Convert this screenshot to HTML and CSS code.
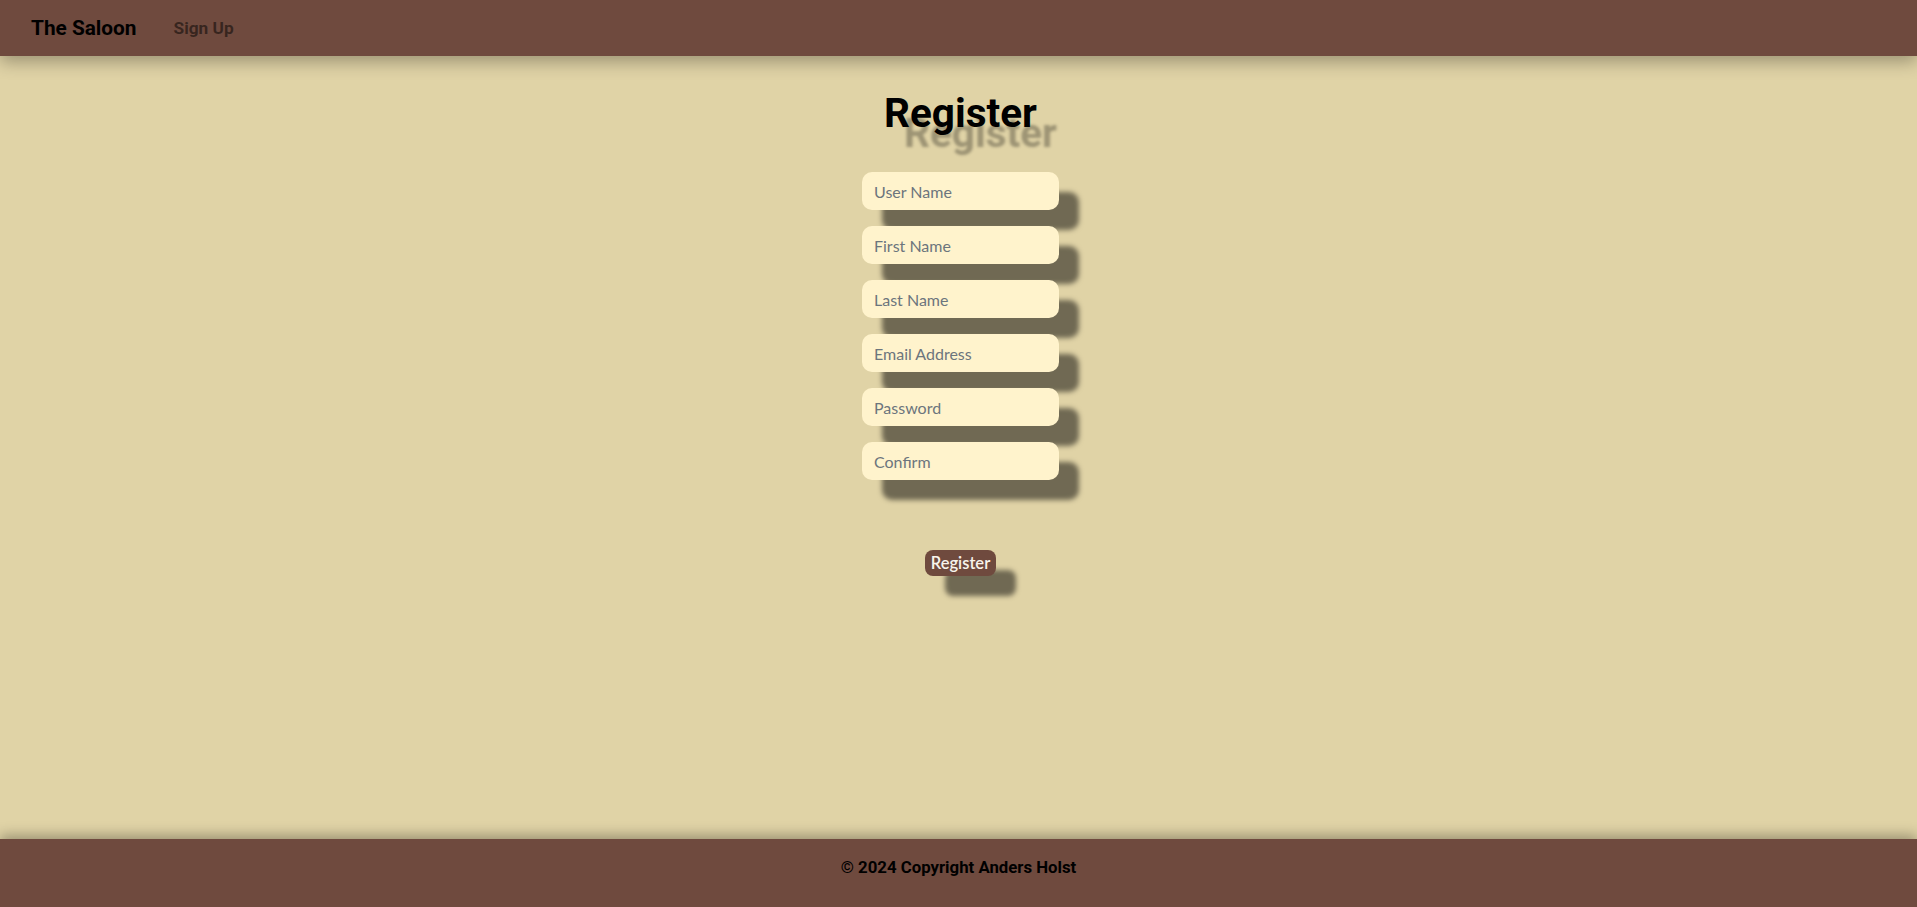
FILE: index.html
```html
<!DOCTYPE html>
<html lang="en">
<head>
<meta charset="utf-8">
<title>Register - The Saloon</title>
<link rel="stylesheet" href="styles.css">
</head>
<body>
<header class="navbar">
  <a class="brand" href="#">The Saloon</a>
  <nav class="nav">
    <a class="nav-link" href="#">Sign Up</a>
  </nav>
</header>
<main class="main">
  <h1 class="title">Register</h1>
  <form class="form">
    <input class="field" type="text" placeholder="User Name">
    <input class="field" type="text" placeholder="First Name">
    <input class="field" type="text" placeholder="Last Name">
    <input class="field" type="email" placeholder="Email Address">
    <input class="field" type="password" placeholder="Password">
    <input class="field" type="password" placeholder="Confirm">
    <button class="btn" type="button">Register</button>
  </form>
</main>
<footer class="footer">
  <p class="copy">© 2024 Copyright Anders Holst</p>
</footer>
</body>
</html>
```
FILE: styles.css
```css
* { box-sizing: border-box; }
html, body { height: 100%; }
body {
  margin: 0;
  background: #e0d3a6;
  font-family: Roboto, "Liberation Sans", sans-serif;
  color: #000;
  display: flex;
  flex-direction: column;
  min-height: 100vh;
}
.navbar {
  height: 56px;
  background: #6f4a3e;
  display: flex;
  align-items: center;
  padding: 0 31px;
  box-shadow: 0 6px 16px rgba(0,0,0,0.3);
  position: relative;
  z-index: 2;
}
.brand {
  font-size: 20.8px;
  font-weight: 700;
  color: #000;
  text-decoration: none;
  margin-right: 37px;
}
.nav-link {
  font-size: 17.3px;
  font-weight: 700;
  color: rgba(0,0,0,0.5);
  text-decoration: none;
}
.main {
  flex: 1;
  display: flex;
  flex-direction: column;
  align-items: center;
  padding-top: 33px;
  padding-left: 4px;
}
.title {
  margin: 0;
  font-size: 40.5px;
  line-height: 48px;
  font-weight: 700;
  text-shadow: 20px 20px 3px rgba(0,0,0,0.3);
}
.form {
  margin-top: 35px;
  display: flex;
  flex-direction: column;
  align-items: center;
  gap: 16px;
}
.field {
  width: 197px;
  height: 38px;
  border: none;
  border-radius: 10px;
  background: #fff3cc;
  padding: 0 12px;
  font-family: Lato, "Liberation Sans", sans-serif;
  font-size: 16px;
  color: #333;
  box-shadow: 20px 20px 5px rgba(0,0,0,0.5);
  outline: none;
}
.field::placeholder { color: #6c757d; }
.btn {
  margin-top: 54px;
  height: 26px;
  padding: 0 6px;
  border: none;
  border-radius: 8px;
  background: #6f4a3e;
  color: #f8f4ec;
  font-family: Lato, "Liberation Sans", sans-serif;
  font-size: 16.5px;
  font-weight: 600;
  box-shadow: 20px 20px 5px rgba(0,0,0,0.5);
}
.footer {
  height: 68px;
  background: #6f4a3e;
  display: flex;
  align-items: center;
  justify-content: center;
  padding-bottom: 12px;
  box-shadow: 0 -4px 12px rgba(0,0,0,0.3);
  position: relative;
}
.copy {
  margin: 0;
  font-size: 16.8px;
  font-weight: 700;
  color: #000;
}
```
